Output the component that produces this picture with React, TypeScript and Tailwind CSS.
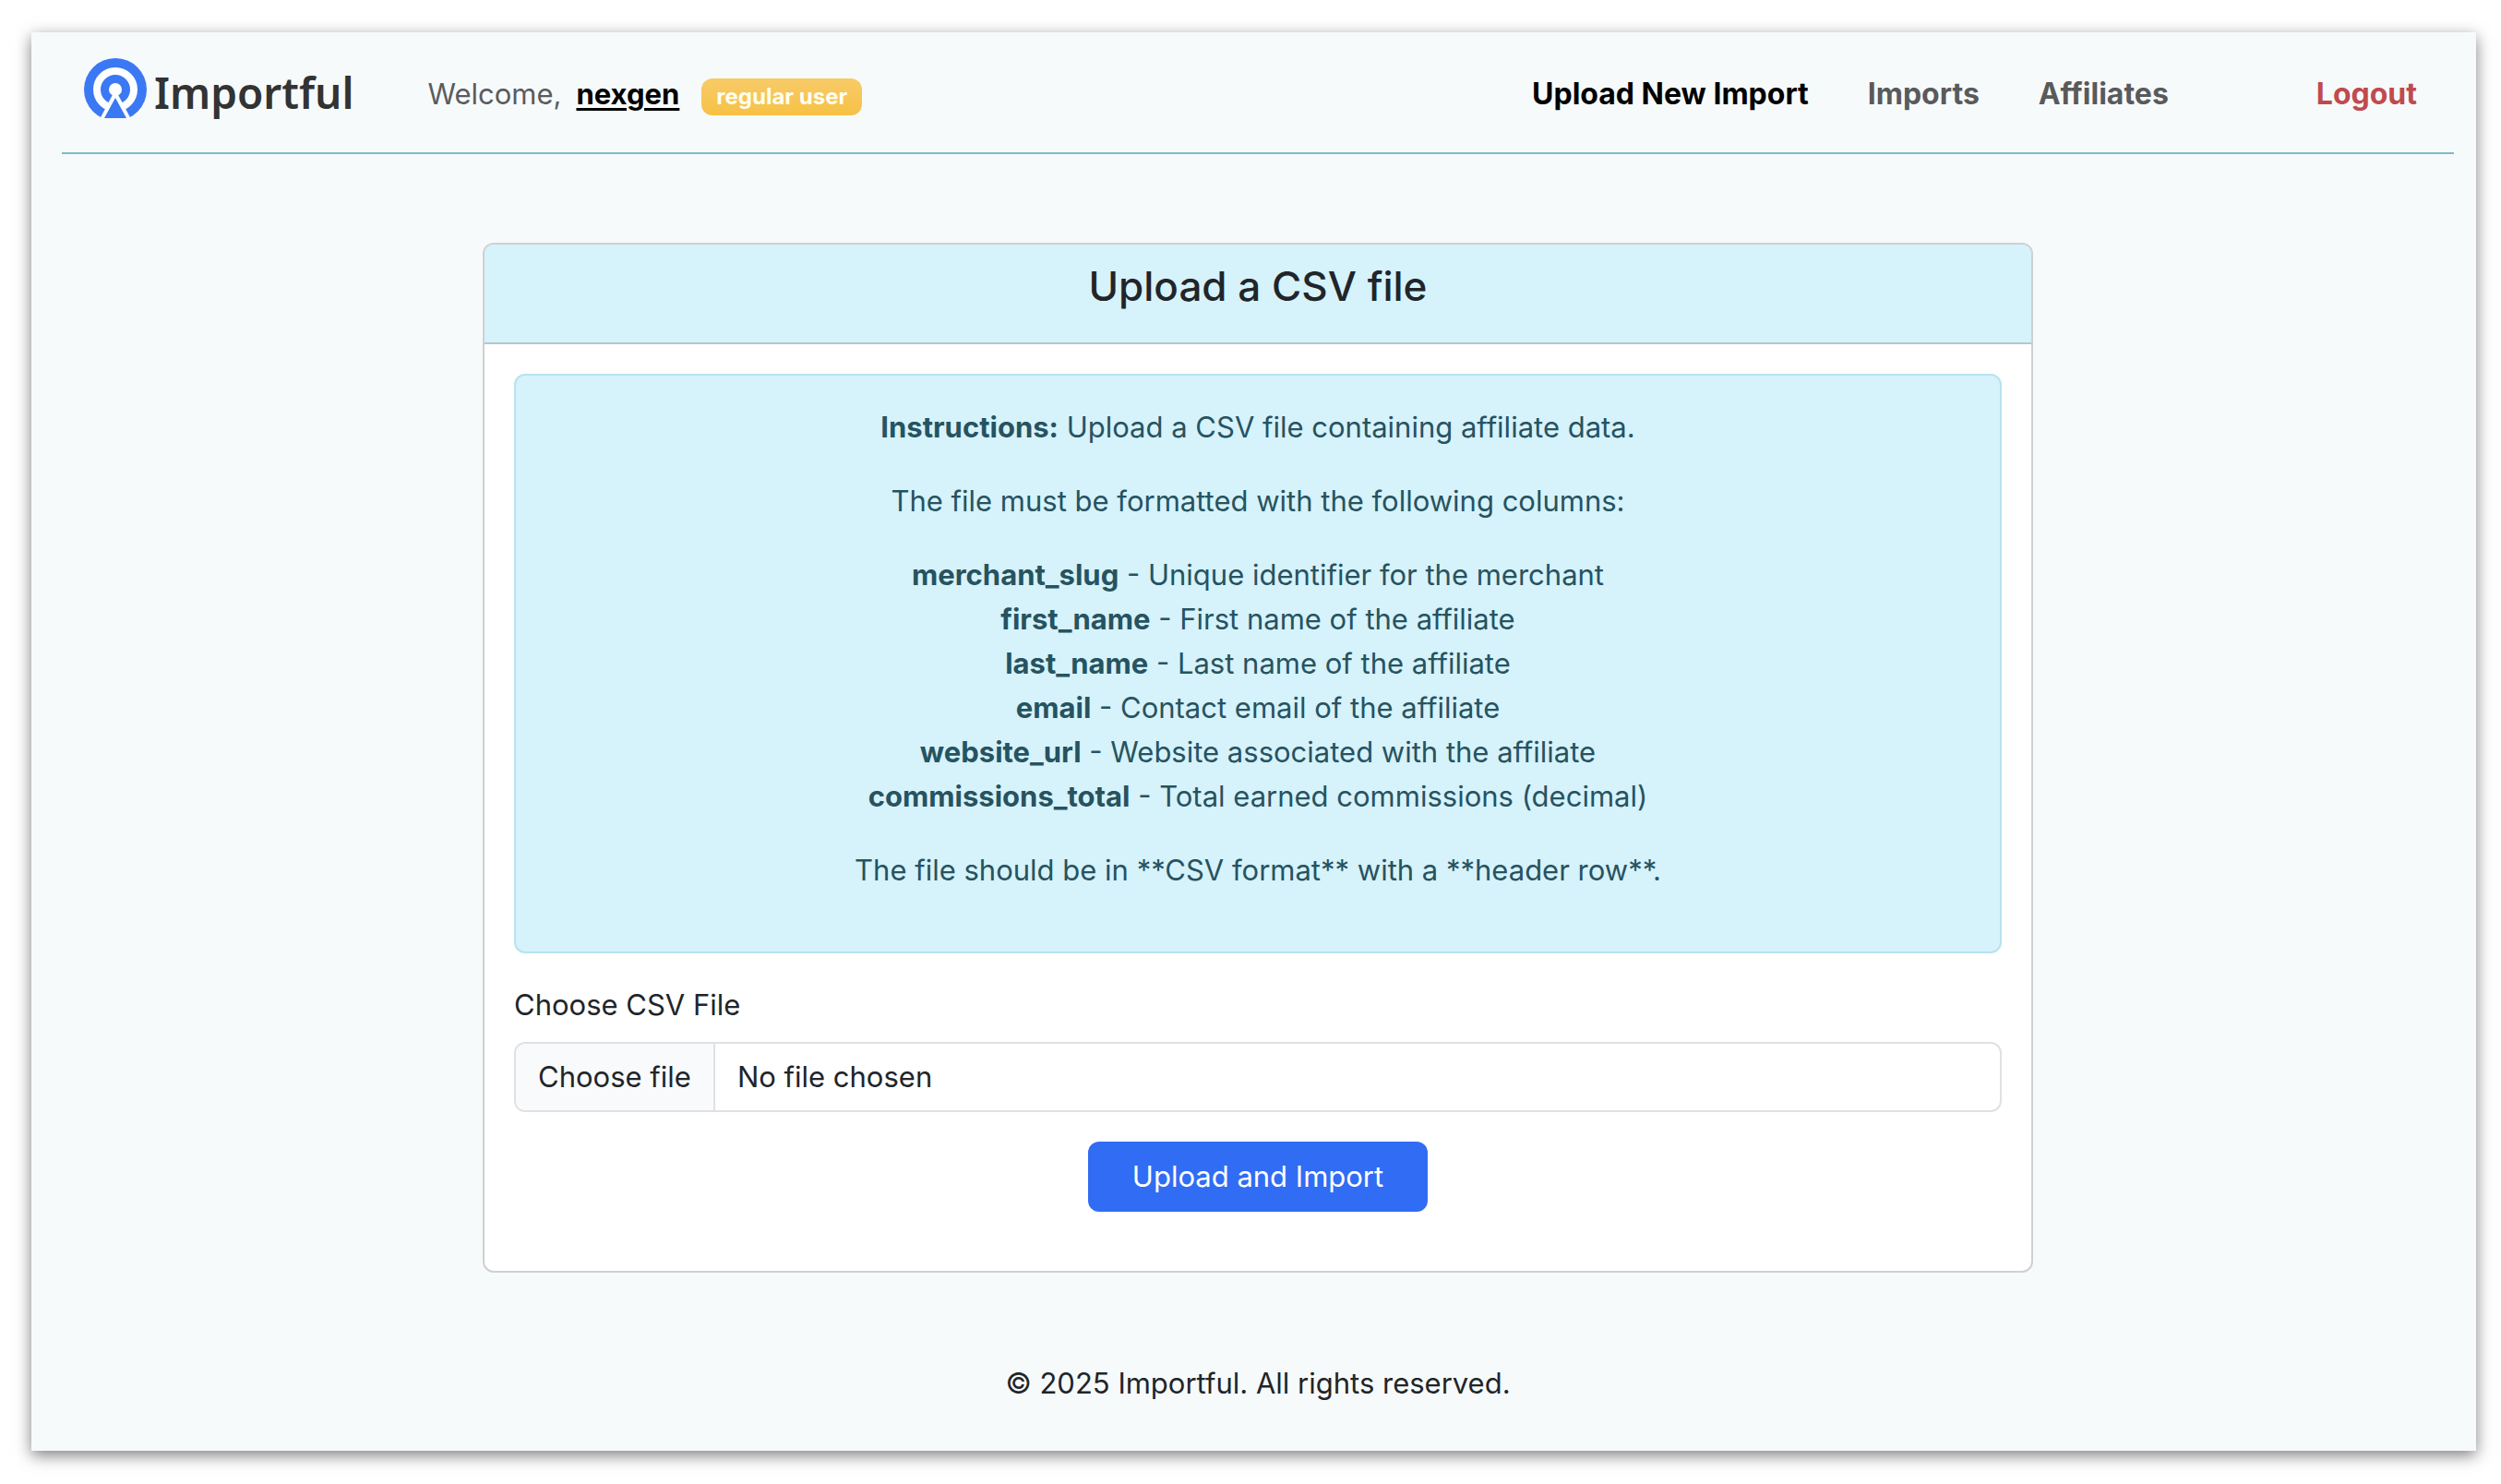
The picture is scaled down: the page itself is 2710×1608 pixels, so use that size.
import { useState } from "react";

const columns = [
  { name: "merchant_slug", text: "Unique identifier for the merchant" },
  { name: "first_name", text: "First name of the affiliate" },
  { name: "last_name", text: "Last name of the affiliate" },
  { name: "email", text: "Contact email of the affiliate" },
  { name: "website_url", text: "Website associated with the affiliate" },
  { name: "commissions_total", text: "Total earned commissions (decimal)" },
];

function LogoMark() {
  return (
    <svg viewBox="0 0 68 68" className="size-[68px] shrink-0" aria-hidden="true">
      <defs>
        <clipPath id="mark-base">
          <rect x="0" y="0" width="68" height="65" />
        </clipPath>
      </defs>
      <g clipPath="url(#mark-base)">
        <circle cx="34" cy="34" r="34" fill="#3b78f3" />
        <circle cx="34" cy="34" r="20" fill="none" stroke="#fcfeff" strokeWidth="8" />
        <circle cx="34" cy="34" r="7" fill="#fcfeff" />
        <path d="M34 34 L16 68 H52 Z" fill="#fcfeff" />
        <path d="M34 43 L22 65 H46 Z" fill="#3b78f3" />
      </g>
    </svg>
  );
}

function Header() {
  return (
    <header className="flex items-center border-b-2 border-[#7bbdc4] pt-7 pb-6 pr-10 pl-6">
      <a href="#" className="flex items-start gap-2 pb-1">
        <LogoMark />
        <span className="font-['Noto_Sans'] text-[46px] leading-[74px] font-semibold text-[#333]">
          Importful
        </span>
      </a>
      <div className="ml-20 flex items-baseline">
        <span className="text-[#595c5f]">Welcome,</span>
        <a href="#" className="ml-4 font-bold text-black underline decoration-[3px] underline-offset-4">
          nexgen
        </a>
        <span className="ml-6 rounded-xl bg-linear-to-b from-[#f8cb68] to-[#f6c143] px-4 text-[24px] leading-10 font-bold text-[#fffef0]">
          regular user
        </span>
      </div>
      <nav className="ml-auto flex items-center gap-16 text-[32px] font-bold text-[#595a5b]">
        <a href="#" className="text-black">
          Upload New Import
        </a>
        <a href="#">Imports</a>
        <a href="#">Affiliates</a>
        <a href="#" className="ml-24 text-[#c04a4e]">
          Logout
        </a>
      </nav>
    </header>
  );
}

function UploadForm() {
  const [fileName, setFileName] = useState("No file chosen");
  return (
    <form onSubmit={(e) => e.preventDefault()}>
      <label htmlFor="csv" className="mb-4 block">
        Choose CSV File
      </label>
      <label
        htmlFor="csv"
        className="relative mb-8 flex overflow-hidden rounded-xl border-2 border-[#dfe1e4] bg-white"
      >
        <input
          id="csv"
          type="file"
          accept=".csv"
          className="sr-only"
          onChange={(e) => setFileName(e.target.files?.[0]?.name ?? "No file chosen")}
        />
        <span className="border-r-2 border-[#dfe1e4] bg-[#f8fafb] px-6 py-3">Choose file</span>
        <span className="px-6 py-3">{fileName}</span>
      </label>
      <div className="mb-8 flex justify-center">
        <button type="submit" className="rounded-xl bg-[#316cf4] px-12 py-[14px] text-white">
          Upload and Import
        </button>
      </div>
    </form>
  );
}

export default function App() {
  return (
    <div className="bg-white pt-[35px] pr-[27px] pb-9 pl-[34px] font-['Inter',sans-serif] text-[31px] leading-[48px] text-[#212529]">
      <div className="bg-[#f7fafb] pr-6 pb-[49px] pl-[33px] shadow-[0_5px_16px_rgba(0,0,0,0.5)]">
        <Header />
        <main className="mx-auto w-2/3 px-6 py-24">
          <section className="overflow-hidden rounded-xl border-2 border-[#cfd0d3] bg-white">
            <div className="border-b-2 border-[#b6c6ce] bg-[#d6f2fb] py-4 text-center">
              <h1 className="mb-4 text-[44px] leading-[58px] font-medium">Upload a CSV file</h1>
            </div>
            <div className="p-8">
              <div className="mb-8 flex flex-col gap-8 rounded-xl border-2 border-[#b6e3ee] bg-[#d6f2fb] px-8 pt-8 pb-16 text-center text-[#265360]">
                <p>
                  <strong>Instructions:</strong> Upload a CSV file containing affiliate data.
                </p>
                <p>The file must be formatted with the following columns:</p>
                <ul>
                  {columns.map((c) => (
                    <li key={c.name}>
                      <strong>{c.name}</strong> - {c.text}
                    </li>
                  ))}
                </ul>
                <p>The file should be in **CSV format** with a **header row**.</p>
              </div>
              <UploadForm />
            </div>
          </section>
        </main>
        <footer className="text-center">© 2025 Importful. All rights reserved.</footer>
      </div>
    </div>
  );
}
